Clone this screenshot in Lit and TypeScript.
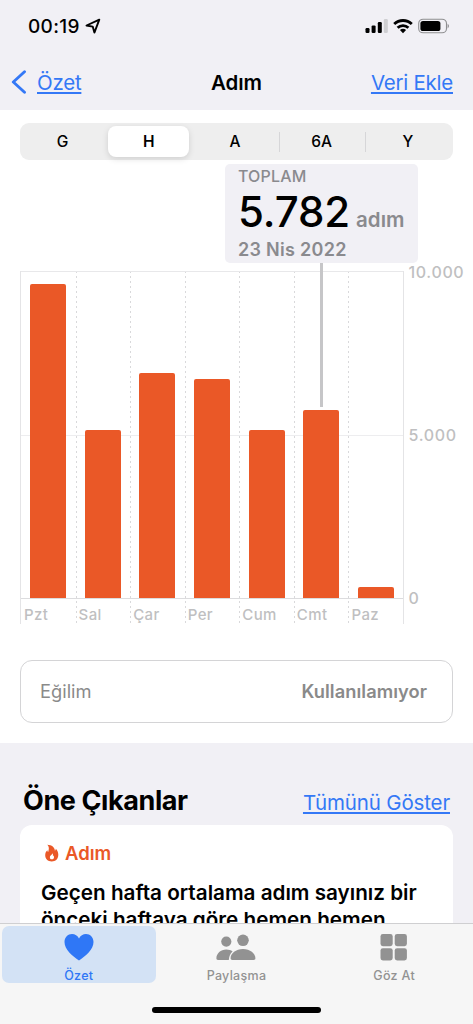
import { LitElement, css, html, svg } from "lit";
import { customElement, property } from "lit/decorators.js";

const MAX_STEPS = 10000;

const DAYS = [
  { label: "Pzt", steps: 9620 },
  { label: "Sal", steps: 5150 },
  { label: "Çar", steps: 6900 },
  { label: "Per", steps: 6710 },
  { label: "Cum", steps: 5150 },
  { label: "Cmt", steps: 5782 },
  { label: "Paz", steps: 350 },
];

@customElement("status-bar")
export class StatusBar extends LitElement {
  static styles = css`
    :host {
      display: flex;
      justify-content: space-between;
      height: 51px;
      padding: 0 24px 0 28px;
      box-sizing: border-box;
      align-items: center;
    }

    .time {
      display: flex;
      align-items: center;
      gap: 5px;
      padding-top: 1px;
      font-size: 19px;
      font-weight: 550;
      letter-spacing: 0.3px;
    }

    .icons {
      display: flex;
      align-items: center;
    }

    .wifi {
      margin: 0 5px;
    }
  `;

  render() {
    return html`
      <div class="time">
        <span>00:19</span>
        <svg width="16" height="16" viewBox="0 0 16 16">
          <path
            d="M14.3 1.6 1.5 7.5l6.2 1.1 1.7 6z"
            fill="none"
            stroke="#000"
            stroke-width="1.9"
            stroke-linejoin="round"
          />
        </svg>
      </div>
      <div class="icons">
        <svg width="23" height="16" viewBox="0 0 23 16">
          <rect x="0.5" y="10" width="4" height="5" rx="1.2" />
          <rect x="6.6" y="7.4" width="4" height="7.6" rx="1.2" />
          <rect x="12.8" y="4" width="4" height="11" rx="1.2" />
          <rect x="18.8" y="1" width="4" height="14" rx="1.2" fill="#cfcfd2" />
        </svg>
        <svg class="wifi" width="20" height="16" viewBox="0 0 20 16">
          <g fill="none" stroke="#000" stroke-width="2.8">
            <path d="M1.2 6.1a12.6 12.6 0 0 1 17.6 0" />
            <path d="M4.6 9.7a7.8 7.8 0 0 1 10.8 0" />
          </g>
          <path d="M10 15.2 6.9 12.1a4.5 4.5 0 0 1 6.2 0z" />
        </svg>
        <svg width="31" height="16" viewBox="0 0 31 16">
          <rect
            x="0.7"
            y="1.2"
            width="27.8"
            height="13.6"
            rx="4.4"
            fill="none"
            stroke="#8e8e90"
            stroke-width="1.1"
          />
          <rect x="2.4" y="2.9" width="20" height="10.2" rx="2.6" />
          <path d="M29.6 5.8a2.6 2.6 0 0 1 0 4.6z" fill="#8e8e90" />
        </svg>
      </div>
    `;
  }
}

@customElement("range-picker")
export class RangePicker extends LitElement {
  static styles = css`
    :host {
      display: grid;
      grid-template-columns: repeat(5, 1fr);
      height: 37px;
      padding: 3px 2px 3px 0;
      box-sizing: border-box;
      border-radius: 9px;
      background-color: #eeeeee;
    }

    .item {
      display: flex;
      align-items: center;
      justify-content: center;
      padding-right: 1px;
      font-size: 15.5px;
      font-weight: 500;
    }

    .item.selected {
      margin: 0 3px 0 2px;
      padding-right: 0;
      border-radius: 8px;
      background-color: #fff;
      font-weight: 600;
      box-shadow: 0 2px 6px rgba(0, 0, 0, 0.13);
    }

    .item.divided {
      padding: 0;
      background: linear-gradient(#d6d6d8, #d6d6d8) left center / 1px 20px
        no-repeat;
    }
  `;

  render() {
    return html`
      <div class="item">G</div>
      <div class="item selected">H</div>
      <div class="item">A</div>
      <div class="item divided">6A</div>
      <div class="item divided">Y</div>
    `;
  }
}

@customElement("step-chart")
export class StepChart extends LitElement {
  static styles = css`
    :host {
      display: block;
    }

    .callout {
      position: relative;
      width: 193px;
      height: 99px;
      margin: 4px 0 8px 205px;
      padding: 4px 13px 0;
      box-sizing: border-box;
      border-radius: 5px;
      background-color: #f1f0f5;
      color: #8a8a8e;
      font-weight: 600;
      white-space: nowrap;
    }

    /* leader from the callout to the top of the selected bar */
    .callout::after {
      content: "";
      position: absolute;
      left: 95px;
      top: 99px;
      width: 3px;
      height: 144px;
      background-color: #c6c6c8;
    }

    .title {
      font-size: 16px;
      line-height: 17px;
      font-weight: 500;
      letter-spacing: 0.15px;
    }

    .value {
      display: flex;
      align-items: baseline;
      gap: 6px;
      height: 54px;
      line-height: 54px;
    }

    .number {
      font-size: 42px;
      font-weight: 500;
      color: #000;
      letter-spacing: -0.1px;
    }

    .unit {
      font-size: 20.5px;
    }

    .date {
      font-size: 18px;
      line-height: 22px;
      letter-spacing: 0.3px;
    }

    .chart {
      display: grid;
      grid-template-columns: 384px 1fr;
      height: 353px;
    }

    .plot {
      display: grid;
      grid-template-columns: repeat(7, 1fr);
      border-left: 1px solid #e4e4e6;
      border-right: 1px solid #e4e4e6;
      box-sizing: border-box;
    }

    .day {
      display: grid;
      grid-template-rows: 328px 25px;
    }

    .day + .day {
      background: repeating-linear-gradient(
          #d9d9db 0 2px,
          transparent 2px 5px
        )
        left top / 1px 100% no-repeat;
    }

    .track {
      display: flex;
      align-items: flex-end;
      justify-content: center;
      border-top: 1px solid #e8e8ea;
      border-bottom: 1px solid #dcdcde;
      background: linear-gradient(#ededef, #ededef) left 163px / 100% 1px
        no-repeat;
    }

    .bar {
      width: 36px;
      border-radius: 2px 2px 0 0;
      background-color: #ea5827;
    }

    .label {
      padding-left: 3px;
      font-size: 15px;
      line-height: 32px;
      height: 25px;
      font-weight: 450;
      letter-spacing: 0.4px;
      color: #bfbfc1;
    }

    .axis {
      display: flex;
      flex-direction: column;
      justify-content: space-between;
      height: 346px;
      margin-top: -9px;
      padding-left: 4.5px;
      font-size: 16px;
      line-height: 20px;
      font-weight: 450;
      letter-spacing: 0.65px;
      color: #bfbfc1;
    }
  `;

  render() {
    return html`
      <div class="callout">
        <div class="title">TOPLAM</div>
        <div class="value">
          <span class="number">5.782</span>
          <span class="unit">adım</span>
        </div>
        <div class="date">23 Nis 2022</div>
      </div>
      <div class="chart">
        <div class="plot">
          ${DAYS.map(
            (day) => html`
              <div class="day">
                <div class="track">
                  <div
                    class="bar"
                    style="height: ${(day.steps / MAX_STEPS) * 100}%"
                  ></div>
                </div>
                <div class="label">${day.label}</div>
              </div>
            `
          )}
        </div>
        <div class="axis">
          <span>10.000</span>
          <span>5.000</span>
          <span>0</span>
        </div>
      </div>
    `;
  }
}

const ICONS: Record<string, unknown> = {
  heart: svg`<path d="M20 33.5C13.5 28.8 5.5 22.5 5.5 14.9 5.5 10.3 8.8 7 13 7c3 0 5.600 1.600 7 4.400C21.4 8.6 24 7 27 7c4.200 0 7.500 3.300 7.500 7.900 0 7.600-8 13.900-14.500 18.600z" />`,
  people: svg`
    <circle cx="10.3" cy="14.6" r="5.1" />
    <path d="M.4 31.3c0-4.800 4.300-8.800 9.900-8.800 2.600 0 4.600.7 6.300 1.900-2.200 1.900-3.500 4.600-3.800 8.600H2c-1.100 0-1.600-.6-1.600-1.700z" />
    <circle cx="27" cy="13.3" r="5.8" />
    <path d="M14.6 31.3c0-4.900 5.300-9.300 12.400-9.300s12.400 4.400 12.400 9.300c0 1.200-.6 1.700-1.800 1.700H16.4c-1.200 0-1.800-.5-1.800-1.700z" />
  `,
  grid: svg`
    <rect x="6.5" y="7" width="12.2" height="12.2" rx="2.4" />
    <rect x="20.7" y="7" width="12.2" height="12.2" rx="2.4" />
    <rect x="6.5" y="21.2" width="12.2" height="12.2" rx="2.4" />
    <rect x="20.7" y="21.2" width="12.2" height="12.2" rx="2.4" />
  `,
};

@customElement("tab-item")
export class TabItem extends LitElement {
  @property() icon = "";
  @property() label = "";

  static styles = css`
    :host {
      display: flex;
      flex-direction: column;
      align-items: center;
      height: 57px;
      margin: 2px 2px 0;
      border-radius: 7px;
      color: #929292;
    }

    :host([active]) {
      background-color: #d3e2f5;
      color: #2f77f6;
    }

    svg {
      display: block;
      flex: none;
      fill: currentColor;
    }

    span {
      font-size: 12.5px;
      line-height: 14px;
      font-weight: 500;
      letter-spacing: 0.3px;
      margin-top: 7px;
    }
  `;

  render() {
    return html`
      <svg width="40" height="36" viewBox="0 -1 40 36">
        ${ICONS[this.icon]}
      </svg>
      <span>${this.label}</span>
    `;
  }
}

@customElement("app-root")
export class AppRoot extends LitElement {
  static styles = css`
    :host {
      display: flex;
      flex-direction: column;
      height: 1024px;
      overflow: hidden;
      background-color: #fff;
      font-family: Inter, "Liberation Sans", sans-serif;
      color: #000;
    }

    header {
      height: 110px;
      flex: none;
      background-color: #f1f0f5;
    }

    nav {
      display: grid;
      grid-template-columns: 1fr auto 1fr;
      align-items: center;
      height: 62px;
      padding: 0 20px 0 11px;
    }

    .link {
      color: #3478f6;
      font-size: 20.5px;
      letter-spacing: -0.25px;
      text-decoration: underline;
      text-decoration-thickness: 1.5px;
      text-underline-offset: 2px;
    }

    .back {
      display: flex;
      align-items: center;
      gap: 10px;
    }

    .add {
      text-align: right;
    }

    h1 {
      margin: 0 0 0 9px;
      font-size: 20.5px;
      font-weight: 600;
      letter-spacing: -0.05px;
    }

    .content {
      flex: none;
      height: 633px;
      padding: 13px 20px 0;
      box-sizing: border-box;
    }

    .trend {
      display: flex;
      justify-content: space-between;
      align-items: center;
      height: 63px;
      margin-top: 36px;
      padding: 0 25px 1px 19px;
      box-sizing: border-box;
      border: 1.5px solid #d4d4d6;
      border-radius: 12px;
      font-size: 18.3px;
      color: #8a8a8a;
    }

    .trend b {
      font-weight: 600;
      letter-spacing: 0.05px;
    }

    .highlights {
      flex: 1;
      min-height: 0;
      overflow: hidden;
      padding: 0 20px;
      background-color: #f1f0f5;
    }

    .heading {
      display: flex;
      justify-content: space-between;
      align-items: baseline;
      height: 82px;
      padding: 0 3px;
      box-sizing: border-box;
      line-height: 115px;
    }

    .heading .link {
      letter-spacing: -0.15px;
    }

    h2 {
      margin: 0;
      font-size: 27px;
      font-weight: 700;
      letter-spacing: -0.4px;
    }

    .card {
      height: 140px;
      padding: 17px 21px 0;
      box-sizing: border-box;
      border-radius: 12px;
      background-color: #fff;
    }

    .kind {
      display: flex;
      align-items: center;
      gap: 5px;
      height: 22px;
      padding-left: 3px;
      color: #ea5827;
      font-size: 18.5px;
      font-weight: 600;
    }

    .card p {
      margin: 15px 0 0;
      font-size: 20.7px;
      line-height: 27px;
      font-weight: 600;
      letter-spacing: 0;
      white-space: nowrap;
    }

    footer {
      flex: none;
      height: 101px;
      box-sizing: border-box;
      border-top: 1px solid #cfcfd1;
      background-color: #f6f6f6;
    }

    .tabs {
      display: grid;
      grid-template-columns: repeat(3, 1fr);
      height: 83px;
    }

    .home {
      width: 169px;
      height: 6px;
      margin: 0 auto;
      border-radius: 3px;
      background-color: #000;
    }
  `;

  render() {
    return html`
      <header>
        <status-bar></status-bar>
        <nav>
          <div class="back">
            <svg width="16" height="24" viewBox="0 0 16 24">
              <path
                d="M13.5 1.8 2.3 12l11.2 10.2"
                fill="none"
                stroke="#3478f6"
                stroke-width="2.9"
                stroke-linecap="round"
                stroke-linejoin="round"
              />
            </svg>
            <a class="link">Özet</a>
          </div>
          <h1>Adım</h1>
          <div class="add"><a class="link">Veri Ekle</a></div>
        </nav>
      </header>
      <div class="content">
        <range-picker></range-picker>
        <step-chart></step-chart>
        <div class="trend">
          <span>Eğilim</span>
          <b>Kullanılamıyor</b>
        </div>
      </div>
      <div class="highlights">
        <div class="heading">
          <h2>Öne Çıkanlar</h2>
          <a class="link">Tümünü Göster</a>
        </div>
        <div class="card">
          <div class="kind">
            <svg width="16" height="18" viewBox="0 0 16 18">
              <path
                fill="#ea5827"
                fill-rule="evenodd"
                d="M3.2.8c4.7.2 7.600 2.700 7.700 5.900.6-.4.9-1 .9-1.900 1.700 1.600 2.500 3.700 2.500 5.900 0 4.100-2.700 6.700-6.600 6.700-3.800 0-6.500-2.500-6.500-6.200 0-2.100.8-3.800 2.200-4.900 0 .9.300 1.500.8 1.800C4.800 5.900 5.700 3 3.200.8zM8.500 9.100c.2 1.500-2.600 2.300-2.600 4.300 0 1.200.8 1.900 2 1.900s2.100-.8 2.100-2.100c0-.8-.2-1.500-.6-2 0 .5-.2.8-.5 1 .2-1.200.1-2.300-.4-3.100z"
              />
            </svg>
            <span>Adım</span>
          </div>
          <p>
            Geçen hafta ortalama adım sayınız bir<br />önceki haftaya göre hemen
            hemen
          </p>
        </div>
      </div>
      <footer>
        <div class="tabs">
          <tab-item icon="heart" label="Özet" active></tab-item>
          <tab-item icon="people" label="Paylaşma"></tab-item>
          <tab-item icon="grid" label="Göz At"></tab-item>
        </div>
        <div class="home"></div>
      </footer>
    `;
  }
}
